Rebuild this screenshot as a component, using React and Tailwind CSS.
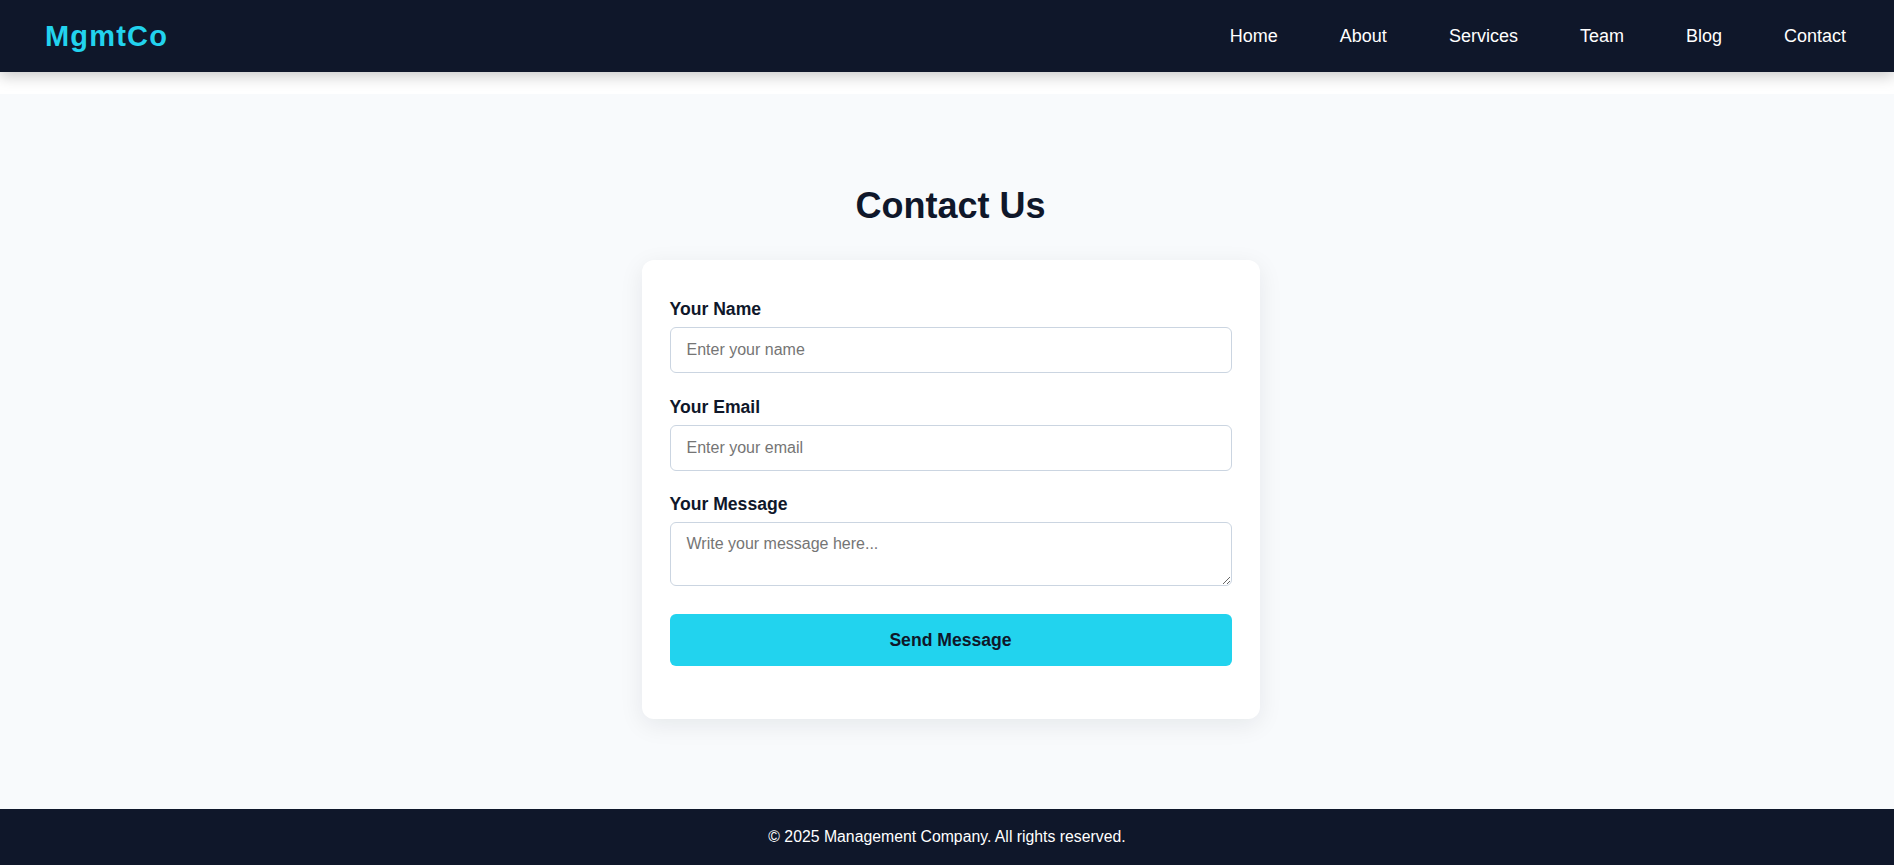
import React from "react";

const font = { fontFamily: '"Liberation Sans", Arial, sans-serif' };

function Field({ label, children }) {
  return (
    <div className="mb-[23.5px]">
      <label className="mb-2 block text-[17.6px] font-bold leading-[20px] text-[#0f172a]">{label}</label>
      {children}
    </div>
  );
}

export default function App() {
  const links = ["Home", "About", "Services", "Team", "Blog", "Contact"];
  return (
    <div className="flex min-h-screen flex-col bg-white font-['Liberation_Sans',Arial,sans-serif]" style={font}>
      <header className="relative z-10 flex h-[72px] items-center justify-between bg-[#0f172a] pl-[45px] pr-12 shadow-[0_4px_14px_rgba(0,0,0,0.22)]">
        <div className="text-[29px] font-bold leading-[42px] tracking-[1.2px] text-[#22d3ee]">MgmtCo</div>
        <nav className="flex items-center gap-[62px]">
          {links.map((l) => (
            <a key={l} href="#" className="text-lg leading-7 text-white">
              {l}
            </a>
          ))}
        </nav>
      </header>

      <main className="mt-[22px] flex-1 bg-[#f8fafc] pb-[90px] pl-[23px] pr-4 pt-[90px]">
        <h1 className="mb-[33px] text-center text-4xl font-bold leading-[43px] text-[#0f172a]">Contact Us</h1>
        <div className="mx-auto w-[618px] rounded-xl bg-white px-7 pb-[53px] pt-[39px] shadow-[0_6px_24px_rgba(15,23,42,0.08)]">
          <form onSubmit={(e) => e.preventDefault()}>
            <Field label="Your Name">
              <input
                type="text"
                placeholder="Enter your name"
                className="block h-[46px] w-full rounded-md border border-[#cbd5e1] bg-white px-4 text-base text-[#0f172a] outline-none placeholder:text-[#757575]"
              />
            </Field>
            <Field label="Your Email">
              <input
                type="email"
                placeholder="Enter your email"
                className="block h-[46px] w-full rounded-md border border-[#cbd5e1] bg-white px-4 text-base text-[#0f172a] outline-none placeholder:text-[#757575]"
              />
            </Field>
            <div className="mb-[28px]">
              <label className="mb-2 block text-[17.6px] font-bold leading-[20px] text-[#0f172a]">Your Message</label>
              <textarea
                placeholder="Write your message here..."
                className="block h-[64px] w-full rounded-md border border-[#cbd5e1] bg-white px-4 py-3 text-base leading-[18px] text-[#0f172a] outline-none placeholder:text-[#757575]"
              />
            </div>
            <button
              type="submit"
              className="block h-[52px] w-full rounded-md bg-[#22d3ee] text-[17.6px] font-bold text-[#0f172a]"
            >
              Send Message
            </button>
          </form>
        </div>
      </main>

      <footer className="flex h-[56px] items-center justify-center bg-[#0f172a] text-[15.8px] text-white">
        © 2025 Management Company. All rights reserved.
      </footer>
    </div>
  );
}
